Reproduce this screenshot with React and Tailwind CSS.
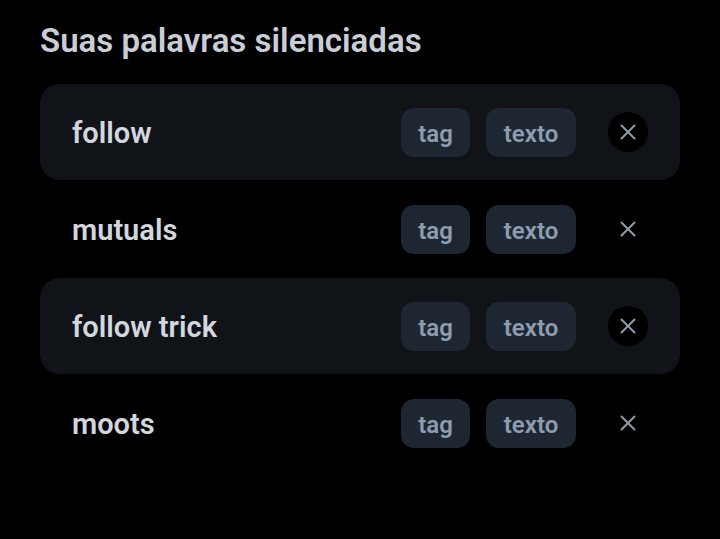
import React from "react";
import { X } from "lucide-react";

const words = [
  { id: 1, word: "follow", highlighted: true },
  { id: 2, word: "mutuals", highlighted: false },
  { id: 3, word: "follow trick", highlighted: true },
  { id: 4, word: "moots", highlighted: false },
];

const MutedWords = () => {
  return (
    <div className="min-h-screen w-full bg-black px-10 pt-[20px] font-['Roboto',sans-serif]">
      <h1 className="text-[33px] font-semibold leading-[42px] text-[#c9ced6]">
        Suas palavras silenciadas
      </h1>
      <div className="mt-[22px] flex flex-col gap-px">
        {words.map((item) => (
          <div
            key={item.id}
            className={`flex h-[96px] items-center rounded-[20px] pl-8 pr-8 ${
              item.highlighted ? "bg-[#101318]" : "bg-black"
            }`}
          >
            <span className="flex-1 pt-[3px] text-[29px] font-semibold text-[#d2d7de]">
              {item.word}
            </span>
            <div className="flex items-center gap-4">
              <span className="flex h-[49px] w-[69px] items-center justify-center rounded-[13px] bg-[#1e2731] pt-[3px] text-[24px] font-semibold text-[#8d9cb0]">
                tag
              </span>
              <span className="flex h-[49px] w-[90px] items-center justify-center rounded-[13px] bg-[#1e2731] pt-[3px] text-[24px] font-semibold text-[#8d9cb0]">
                texto
              </span>
              <button className="ml-4 flex h-10 w-10 items-center justify-center rounded-full bg-black text-[#8f9bab]">
                <X className="h-[26px] w-[26px]" strokeWidth={1.8} />
              </button>
            </div>
          </div>
        ))}
      </div>
    </div>
  );
};

export default MutedWords;
